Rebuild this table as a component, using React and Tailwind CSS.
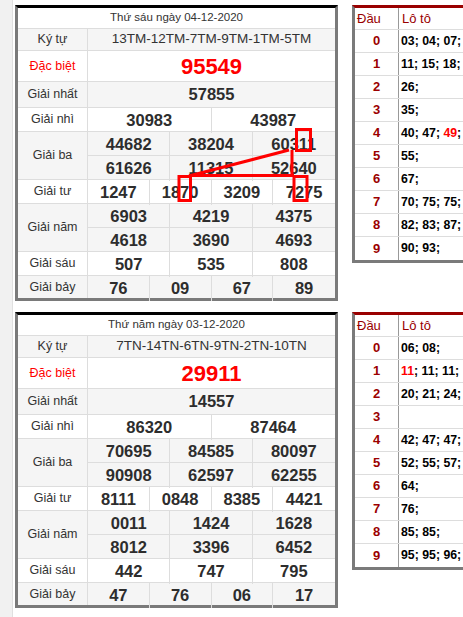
import React from "react";

const blocks = [
  {
    title: "Thứ sáu ngày 04-12-2020",
    kytu: "13TM-12TM-7TM-9TM-1TM-5TM",
    db: "95549",
    g1: ["57855"],
    g2: ["30983", "43987"],
    g3: [
      ["44682", "38204", "60311"],
      ["61626", "11315", "52640"],
    ],
    g4: ["1247", "1870", "3209", "7275"],
    g5: [
      ["6903", "4219", "4375"],
      ["4618", "3690", "4693"],
    ],
    g6: ["507", "535", "808"],
    g7: ["76", "09", "67", "89"],
    loto: [
      [["03"], ["04"], ["07"]],
      [["11"], ["15"], ["18"]],
      [["26"]],
      [["35"]],
      [["40"], ["47"], ["49", 1]],
      [["55"]],
      [["67"]],
      [["70"], ["75"], ["75"]],
      [["82"], ["83"], ["87"]],
      [["90"], ["93"]],
    ],
  },
  {
    title: "Thứ năm ngày 03-12-2020",
    kytu: "7TN-14TN-6TN-9TN-2TN-10TN",
    db: "29911",
    g1: ["14557"],
    g2: ["86320", "87464"],
    g3: [
      ["70695", "84585", "80097"],
      ["90908", "62597", "62255"],
    ],
    g4: ["8111", "0848", "8385", "4421"],
    g5: [
      ["0011", "1424", "1628"],
      ["8012", "3396", "6452"],
    ],
    g6: ["442", "747", "795"],
    g7: ["47", "76", "06", "17"],
    loto: [
      [["06"], ["08"]],
      [["11", 1], ["11"], ["11"]],
      [["20"], ["21"], ["24"]],
      [],
      [["42"], ["47"], ["47"]],
      [["52"], ["55"], ["57"]],
      [["64"]],
      [["76"]],
      [["85"], ["85"]],
      [["95"], ["95"], ["96"]],
    ],
  },
];

const gridCols = {
  1: "grid-cols-1",
  2: "grid-cols-2",
  3: "grid-cols-3",
  4: "grid-cols-4",
};

function NumRow({ items, className = "" }) {
  return (
    <div className={`grid ${gridCols[items.length]} ${className}`}>
      {items.map((v, i) => (
        <div
          key={i}
          className="flex items-center justify-center border-r border-[#dddddd] last:border-r-0 font-bold text-[16.5px] text-[#2d2d2d]"
        >
          {v}
        </div>
      ))}
    </div>
  );
}

function Label({ children, red }) {
  return (
    <div
      className={`w-[70px] shrink-0 border-r border-[#dddddd] flex items-center justify-center text-[12.5px] ${
        red ? "text-[#ff0000]" : "text-[#333333]"
      }`}
    >
      {children}
    </div>
  );
}

function ResultTable({ b }) {
  return (
    <div className="w-[323px] shrink-0 border-t-[3px] border-t-black border-x-[3px] border-b-[3px] border-x-[#7a7a7a] border-b-[#7a7a7a] bg-white">
      <div className="h-[21px] border-b border-[#dddddd] flex items-center justify-center text-[11.5px] text-[#333333]">
        {b.title}
      </div>
      <div className="h-[22px] flex border-b border-[#dddddd] bg-[#f5f5f5]">
        <Label>Ký tự</Label>
        <div className="flex-1 flex items-center justify-center text-[13.5px] text-[#333333]">
          {b.kytu}
        </div>
      </div>
      <div className="h-[31px] flex border-b border-[#dddddd]">
        <Label red>Đặc biệt</Label>
        <div className="flex-1 flex items-center justify-center font-bold text-[22px] text-[#ff0000]">
          {b.db}
        </div>
      </div>
      <div className="h-[26px] flex border-b border-[#dddddd] bg-[#f5f5f5]">
        <Label>Giải nhất</Label>
        <NumRow items={b.g1} className="flex-1" />
      </div>
      <div className="h-[24px] flex border-b border-[#dddddd]">
        <Label>Giải nhì</Label>
        <NumRow items={b.g2} className="flex-1" />
      </div>
      <div className="h-[48px] flex border-b border-[#dddddd] bg-[#f5f5f5]">
        <Label>Giải ba</Label>
        <div className="flex-1 flex flex-col">
          <NumRow items={b.g3[0]} className="h-[24px] border-b border-[#dddddd]" />
          <NumRow items={b.g3[1]} className="flex-1" />
        </div>
      </div>
      <div className="h-[24px] flex border-b border-[#dddddd]">
        <Label>Giải tư</Label>
        <NumRow items={b.g4} className="flex-1" />
      </div>
      <div className="h-[48px] flex border-b border-[#dddddd] bg-[#f5f5f5]">
        <Label>Giải năm</Label>
        <div className="flex-1 flex flex-col">
          <NumRow items={b.g5[0]} className="h-[24px] border-b border-[#dddddd]" />
          <NumRow items={b.g5[1]} className="flex-1" />
        </div>
      </div>
      <div className="h-[24px] flex border-b border-[#dddddd]">
        <Label>Giải sáu</Label>
        <NumRow items={b.g6} className="flex-1" />
      </div>
      <div className="h-[22px] flex bg-[#f5f5f5]">
        <Label>Giải bảy</Label>
        <NumRow items={b.g7} className="flex-1" />
      </div>
    </div>
  );
}

function LotoTable({ rows }) {
  return (
    <div className="w-[150px] shrink-0 self-start border-t-[3px] border-t-[#990000] border-l-[3px] border-b-[3px] border-l-[#7a7a7a] border-b-[#7a7a7a] bg-white">
      <div className="h-[22px] flex border-b border-[#dddddd] text-[13px] text-[#990000]">
        <div className="w-[44px] shrink-0 border-r border-[#999999] pl-[2px] flex items-center">
          Đầu
        </div>
        <div className="pl-[3px] flex items-center">Lô tô</div>
      </div>
      {rows.map((items, i) => (
        <div
          key={i}
          className="h-[23px] flex border-b border-[#dddddd] last:border-b-0"
        >
          <div className="w-[44px] shrink-0 border-r border-[#999999] flex items-center justify-center font-bold text-[13px] text-[#9b0000]">
            {i}
          </div>
          <div className="pl-[2px] flex items-center whitespace-pre font-bold text-[12.3px] text-black">
            <span>
              {items.map(([v, r], j) => (
                <React.Fragment key={j}>
                  <span className={r ? "text-[#ff0000]" : ""}>{v}</span>
                  {j < items.length - 1 ? "; " : ";"}
                </React.Fragment>
              ))}
            </span>
          </div>
        </div>
      ))}
    </div>
  );
}

export default function App() {
  return (
    <div className="relative w-[463px] h-[617px] overflow-hidden bg-white flex font-['Liberation_Sans',Arial,sans-serif]">
      <div className="w-[13px] shrink-0 bg-[#f1f1f1] border-r border-[#e0e0e0]" />
      <div className="ml-[2px] pt-[5px] flex flex-col gap-[11px]">
        {blocks.map((b, i) => (
          <div key={i} className="flex gap-[14px] items-start">
            <ResultTable b={b} />
            <LotoTable rows={b.loto} />
          </div>
        ))}
      </div>
      <svg
        className="absolute left-0 top-0 pointer-events-none"
        width="463"
        height="617"
        viewBox="0 0 463 617"
      >
        <g stroke="#ff0000" strokeWidth="3" fill="none">
          <rect x="296.5" y="129.5" width="14" height="21" />
          <rect x="179" y="176.5" width="11.5" height="24" />
          <rect x="294" y="176.5" width="13" height="24" />
          <line x1="289" y1="150" x2="189" y2="176" />
          <line x1="292" y1="150" x2="292" y2="176" />
          <line x1="189" y1="175.5" x2="294" y2="175.5" />
        </g>
      </svg>
    </div>
  );
}
